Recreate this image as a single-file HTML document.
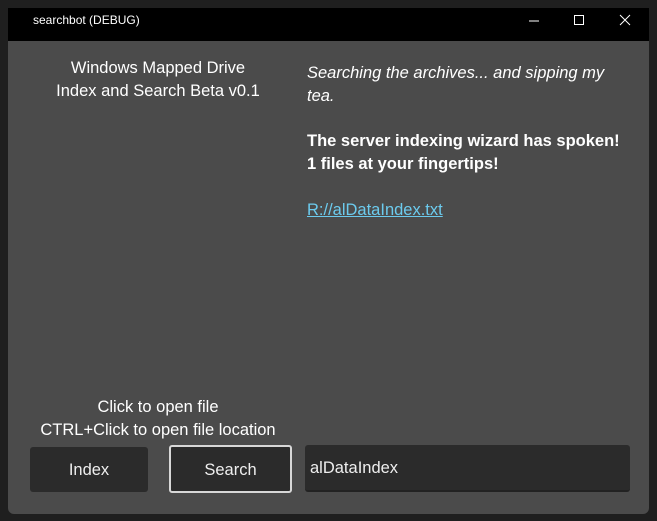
<!DOCTYPE html>
<html><head><meta charset="utf-8"><style>
*{margin:0;padding:0;box-sizing:border-box}
body{width:657px;height:521px;background:#1f1f1f;font-family:"Liberation Sans",sans-serif;color:#fff;position:relative;overflow:hidden}
.win{position:absolute;left:8px;top:8px;width:641px;height:506px;background:#4b4b4b;border-radius:0 0 6px 6px}
.tb{position:absolute;left:8px;top:8px;width:641px;height:33px;background:#000}
.t{position:absolute;white-space:nowrap}
.btn{position:absolute;background:#2b2b2b;border-radius:3px;font-size:16.5px;display:flex;align-items:center;justify-content:center;color:#eee}
</style></head><body>
<div class="win"></div>
<div class="tb"></div>
<div class="t" style="left:33px;top:13px;font-size:12px">searchbot (DEBUG)</div>
<svg style="position:absolute;left:520px;top:12px" width="120" height="18">
<line x1="9" y1="9" x2="19" y2="9" stroke="#fff" stroke-width="1"/>
<rect x="54.5" y="3.5" width="9" height="9" fill="none" stroke="#fff" stroke-width="1"/>
<path d="M100 3 L110 13 M110 3 L100 13" stroke="#fff" stroke-width="1"/>
</svg>
<div class="t" style="left:8px;width:300px;top:57px;font-size:16.5px;text-align:center;line-height:23px">Windows Mapped Drive<br>Index and Search Beta v0.1</div>
<div class="t" style="left:307px;top:62px;font-size:16.5px;font-style:italic;line-height:23px">Searching the archives... and sipping my<br>tea.</div>
<div class="t" style="left:307px;top:130px;font-size:16.5px;font-weight:bold;line-height:23px">The server indexing wizard has spoken!<br>1 files at your fingertips!</div>
<div class="t" style="left:307px;top:201px;font-size:16.5px;color:#6ccbee;text-decoration:underline">R://alDataIndex.txt</div>
<div class="t" style="left:8px;width:300px;top:396px;font-size:16.5px;text-align:center;line-height:23px">Click to open file<br>CTRL+Click to open file location</div>
<div class="btn" style="left:30px;top:447px;width:118px;height:45px;padding-top:2px">Index</div>
<div class="btn" style="left:169px;top:445px;width:123px;height:48px;border:2px solid #d8d8d8;padding-top:3px">Search</div>
<div class="btn" style="left:305px;top:445px;width:325px;height:47px;justify-content:flex-start;padding-left:5px;padding-top:2px;border-bottom:2px solid #222">alDataIndex</div>
</body></html>
